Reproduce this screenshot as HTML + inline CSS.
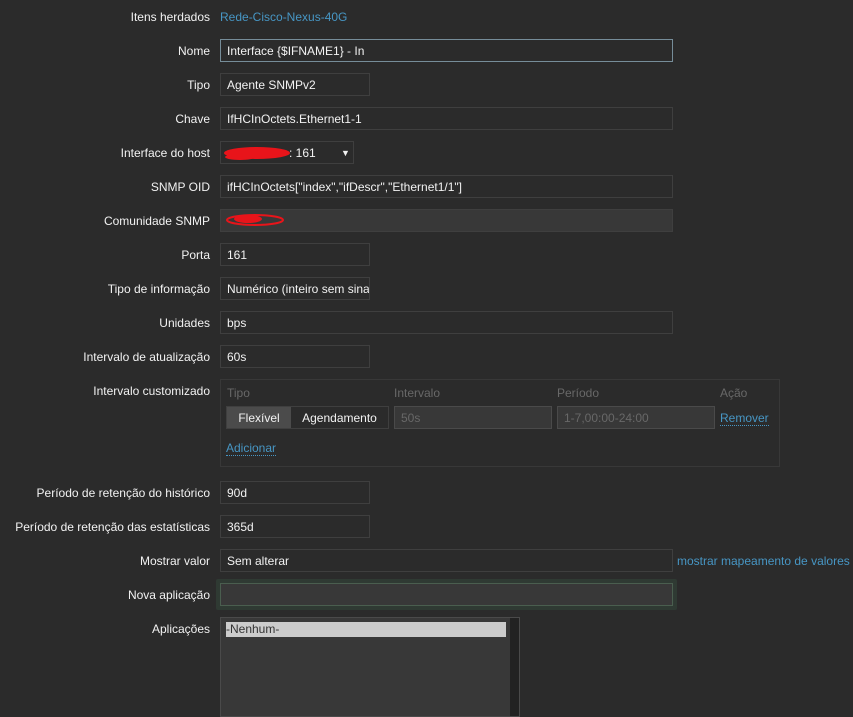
<!DOCTYPE html>
<html><head><meta charset="utf-8"><style>
body{margin:0;background:#2b2b2b;font-family:"Liberation Sans",Arial,sans-serif;font-size:12px;color:#f2f2f2;width:853px;height:714px;overflow:hidden;position:relative}
.l{position:absolute;right:643px;text-align:right;white-space:nowrap;line-height:14px}
.i{position:absolute;left:220px;border:1px solid #3f3f3f;background:#2b2b2b;box-sizing:border-box;height:23px;padding:0 6px;line-height:22px;white-space:nowrap;overflow:hidden;color:#f2f2f2}
a{color:#4796c4;text-decoration:none}
.d{border-bottom:1px dotted #4796c4}
.h{position:absolute;color:#686868;top:386px}
</style></head><body>
<div class="l" style="top:10px">Itens herdados</div><a style="position:absolute;left:220px;top:10px">Rede-Cisco-Nexus-40G</a>
<div class="l" style="top:44px">Nome</div><div class="i" style="top:39px;width:453px;border-color:#768d99">Interface {$IFNAME1} - In</div>
<div class="l" style="top:78px">Tipo</div><div class="i" style="top:73px;width:150px">Agente SNMPv2</div>
<div class="l" style="top:112px">Chave</div><div class="i" style="top:107px;width:453px">IfHCInOctets.Ethernet1-1</div>
<div class="l" style="top:146px">Interface do host</div><div class="i" style="top:141px;width:134px;background:#2b2b2b"><span style="margin-left:62px">: 161</span><span style="position:absolute;left:120px;font-size:9px">▼</span></div>
<div class="l" style="top:180px">SNMP OID</div><div class="i" style="top:175px;width:453px">ifHCInOctets["index","ifDescr","Ethernet1/1"]</div>
<div class="l" style="top:214px">Comunidade SNMP</div><div class="i" style="top:209px;width:453px;background:#383838"></div>
<div class="l" style="top:248px">Porta</div><div class="i" style="top:243px;width:150px">161</div>
<div class="l" style="top:282px">Tipo de informação</div><div class="i" style="top:277px;width:150px">Numérico (inteiro sem sinal)</div>
<div class="l" style="top:316px">Unidades</div><div class="i" style="top:311px;width:453px">bps</div>
<div class="l" style="top:350px">Intervalo de atualização</div><div class="i" style="top:345px;width:150px">60s</div>
<div class="l" style="top:384px">Intervalo customizado</div>
<div style="position:absolute;left:220px;top:379px;width:560px;height:88px;border:1px solid #383838;box-sizing:border-box"></div>
<div class="h" style="left:227px">Tipo</div><div class="h" style="left:394px">Intervalo</div><div class="h" style="left:557px">Período</div><div class="h" style="left:720px">Ação</div>
<div style="position:absolute;left:226px;top:406px;width:163px;height:23px;border:1px solid #3f3f3f;box-sizing:border-box;line-height:22px">
<span style="position:absolute;left:0;top:0;width:64px;height:21px;background:#4b4b4b;text-align:center">Flexível</span><span style="position:absolute;left:64px;width:97px;text-align:center">Agendamento</span></div>
<div class="i" style="left:394px;top:406px;width:158px;color:#686868;background:#383838;border-color:#4a4a4a">50s</div>
<div class="i" style="left:557px;top:406px;width:158px;color:#686868;background:#383838;border-color:#4a4a4a">1-7,00:00-24:00</div>
<a class="d" style="position:absolute;left:720px;top:411px">Remover</a>
<a class="d" style="position:absolute;left:226px;top:441px">Adicionar</a>
<div class="l" style="top:486px">Período de retenção do histórico</div><div class="i" style="top:481px;width:150px">90d</div>
<div class="l" style="top:520px">Período de retenção das estatísticas</div><div class="i" style="top:515px;width:150px">365d</div>
<div class="l" style="top:554px">Mostrar valor</div><div class="i" style="top:549px;width:453px">Sem alterar</div><a style="position:absolute;left:677px;top:554px">mostrar mapeamento de valores</a>
<div class="l" style="top:588px">Nova aplicação</div>
<div style="position:absolute;left:216px;top:579px;width:461px;height:31px;background:#2f3a33;border-radius:2px"></div>
<div class="i" style="top:583px;width:453px;background:#383838;border-color:#4a5e4f"></div>
<div class="l" style="top:622px">Aplicações</div>
<div style="position:absolute;left:220px;top:617px;width:300px;height:100px;border:1px solid #4a4a4a;box-sizing:border-box;background:#383838">
<div style="position:absolute;right:0;top:0;width:9px;height:100%;background:#222"></div>
<div style="position:absolute;left:5px;top:4px;width:280px;height:15px;background:#cccccc;color:#333;line-height:15px">-Nenhum-</div></div>
<svg style="position:absolute;left:0;top:0" width="853" height="714">
<ellipse cx="257" cy="153" rx="33" ry="6" fill="#e8141a"/>
<ellipse cx="240" cy="157" rx="15" ry="3" fill="#e8141a"/>
<ellipse cx="255" cy="220" rx="28" ry="5" fill="none" stroke="#e8141a" stroke-width="2"/>
<ellipse cx="248" cy="219" rx="14" ry="4" fill="#e8141a"/>
</svg>
</body></html>
